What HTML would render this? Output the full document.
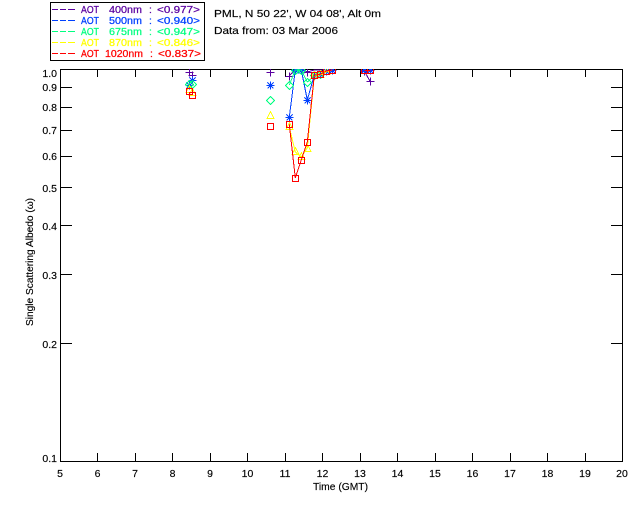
<!DOCTYPE html>
<html>
<head>
<meta charset="utf-8">
<style>
html,body{margin:0;padding:0;background:#fff;width:640px;height:512px;overflow:hidden}
svg{display:block}
text{font-family:"Liberation Sans",sans-serif;font-size:10.5px;fill:#000;stroke:#000;stroke-width:.15}
.l{shape-rendering:crispEdges}
.c1 text{fill:#5a00a0;stroke:#5a00a0;stroke-width:.25}
.c2 text{fill:#0040ff;stroke:#0040ff;stroke-width:.25}
.c3 text{fill:#00ff80;stroke:#00ff80;stroke-width:.25}
.c4 text{fill:#ffff00;stroke:#ffff00;stroke-width:.25}
.c5 text{fill:#ff0000;stroke:#ff0000;stroke-width:.25}
</style>
</head>
<body>
<svg width="640" height="512" viewBox="0 0 640 512" xmlns="http://www.w3.org/2000/svg">
<defs>
<clipPath id="c"><rect x="60" y="69" width="563" height="392"/></clipPath>
<path id="p" d="M-4 0H4M0-4V4" fill="none" stroke-width="1"/>
<path id="s" d="M-4 0H4M0-4V4M-3-3L3 3M-3 3L3-3" fill="none" stroke-width="1"/>
<path id="d" d="M0-4L4 0L0 4L-4 0Z" fill="none" stroke-width="1"/>
<path id="t" d="M0-5L3.5 2H-3.5Z" fill="none" stroke-width="1"/>
<rect id="q" x="-3" y="-3" width="6" height="6" fill="none" stroke-width="1"/>
</defs>

<!-- legend -->
<rect x="50.5" y="2.5" width="154" height="58" fill="none" stroke="#000" class="l"/>
<g class="l" fill="none">
<path d="M52 9.5h6M60 9.5h6M68 9.5h7" stroke="#5a00a0"/>
<path d="M52 20.5h6M60 20.5h6M68 20.5h7" stroke="#0040ff"/>
<path d="M52 31.5h6M60 31.5h6M68 31.5h7" stroke="#00ff80"/>
<path d="M52 42.5h6M60 42.5h6M68 42.5h7" stroke="#ffff00"/>
<path d="M52 53.5h6M60 53.5h6M68 53.5h7" stroke="#ff0000"/>
</g>
<g class="c1">
<text x="81" y="13" textLength="18" lengthAdjust="spacingAndGlyphs">AOT</text>
<text x="109" y="13" textLength="33" lengthAdjust="spacingAndGlyphs">400nm</text>
<text x="149" y="13">:</text>
<text x="157" y="13" textLength="43" lengthAdjust="spacingAndGlyphs">&lt;0.977&gt;</text>
</g>
<g class="c2">
<text x="81" y="24" textLength="18" lengthAdjust="spacingAndGlyphs">AOT</text>
<text x="109" y="24" textLength="33" lengthAdjust="spacingAndGlyphs">500nm</text>
<text x="149" y="24">:</text>
<text x="157" y="24" textLength="43" lengthAdjust="spacingAndGlyphs">&lt;0.940&gt;</text>
</g>
<g class="c3">
<text x="81" y="35" textLength="18" lengthAdjust="spacingAndGlyphs">AOT</text>
<text x="109" y="35" textLength="33" lengthAdjust="spacingAndGlyphs">675nm</text>
<text x="149" y="35">:</text>
<text x="157" y="35" textLength="43" lengthAdjust="spacingAndGlyphs">&lt;0.947&gt;</text>
</g>
<g class="c4">
<text x="81" y="46" textLength="18" lengthAdjust="spacingAndGlyphs">AOT</text>
<text x="109" y="46" textLength="33" lengthAdjust="spacingAndGlyphs">870nm</text>
<text x="149" y="46">:</text>
<text x="157" y="46" textLength="43" lengthAdjust="spacingAndGlyphs">&lt;0.846&gt;</text>
</g>
<g class="c5">
<text x="81" y="57" textLength="18" lengthAdjust="spacingAndGlyphs">AOT</text>
<text x="105" y="57" textLength="38" lengthAdjust="spacingAndGlyphs">1020nm</text>
<text x="150" y="57">:</text>
<text x="158" y="57" textLength="43" lengthAdjust="spacingAndGlyphs">&lt;0.837&gt;</text>
</g>

<!-- title -->
<text x="214" y="17" textLength="167" lengthAdjust="spacingAndGlyphs">PML, N 50 22', W 04 08', Alt 0m</text>
<text x="214" y="34" textLength="124" lengthAdjust="spacingAndGlyphs">Data from: 03 Mar 2006</text>

<!-- axes -->
<g class="l" fill="none" stroke="#000">
<rect x="60.5" y="69.5" width="562" height="392"/>
<path d="M97.5 69v8M135.5 69v8M172.5 69v8M210.5 69v8M247.5 69v8M285.5 69v8M322.5 69v8M360.5 69v8M397.5 69v8M435.5 69v8M472.5 69v8M510.5 69v8M547.5 69v8M585.5 69v8"/>
<path d="M97.5 453v8M135.5 453v8M172.5 453v8M210.5 453v8M247.5 453v8M285.5 453v8M322.5 453v8M360.5 453v8M397.5 453v8M435.5 453v8M472.5 453v8M510.5 453v8M547.5 453v8M585.5 453v8"/>
<path d="M60 87.5h12M60 107.5h12M60 130.5h12M60 156.5h12M60 187.5h12M60 225.5h12M60 274.5h12M60 343.5h12"/>
<path d="M611 87.5h12M611 107.5h12M611 130.5h12M611 156.5h12M611 187.5h12M611 225.5h12M611 274.5h12M611 343.5h12"/>
</g>

<!-- y labels -->
<g text-anchor="end">
<text x="57" y="77">1.0</text>
<text x="57" y="91">0.9</text>
<text x="57" y="111">0.8</text>
<text x="57" y="134">0.7</text>
<text x="57" y="160">0.6</text>
<text x="57" y="192">0.5</text>
<text x="57" y="230">0.4</text>
<text x="57" y="279">0.3</text>
<text x="57" y="348">0.2</text>
<text x="57" y="462">0.1</text>
</g>
<!-- x labels -->
<g text-anchor="middle">
<text x="60" y="477">5</text><text x="97.5" y="477">6</text><text x="135" y="477">7</text>
<text x="172.5" y="477">8</text><text x="210" y="477">9</text><text x="247.5" y="477">10</text>
<text x="285" y="477">11</text><text x="322.5" y="477">12</text><text x="360" y="477">13</text>
<text x="397.5" y="477">14</text><text x="435" y="477">15</text><text x="472.5" y="477">16</text>
<text x="510" y="477">17</text><text x="547.5" y="477">18</text><text x="585" y="477">19</text>
<text x="622" y="477">20</text>
</g>
<text x="313" y="490" textLength="55" lengthAdjust="spacingAndGlyphs">Time (GMT)</text>
<text transform="translate(33,326) rotate(-90)" textLength="128" lengthAdjust="spacingAndGlyphs">Single Scattering Albedo (ω)</text>

<!-- data -->
<g clip-path="url(#c)" fill="none" class="l">
<g stroke="#5a00a0">
<path d="M289.3 76L295.3 69L301.3 69L307.3 72L314.3 70L320.3 70L326.3 70L332.3 70M364.3 71L370.3 81.7" stroke-width="1"/>
<use href="#p" x="189.5" y="72.5"/><use href="#p" x="192.5" y="75.5"/><use href="#p" x="270.5" y="72.5"/><use href="#p" x="289.5" y="76.5"/><use href="#p" x="307.5" y="72.5"/><use href="#p" x="364.5" y="71.5"/><use href="#p" x="370.5" y="81.5"/>
</g>
<g stroke="#0040ff">
<path d="M289.3 117.3L295.3 70L301.3 70L307.3 100L314.3 75.3L320.3 74.3L326.3 71L332.3 70M364.3 70.7L370.3 70.7" stroke-width="1"/>
<use href="#s" x="189.5" y="85.5"/><use href="#s" x="192.5" y="80.5"/><use href="#s" x="270.5" y="85.5"/><use href="#s" x="289.5" y="117.5"/><use href="#s" x="295.5" y="70.5"/><use href="#s" x="301.5" y="70.5"/><use href="#s" x="307.5" y="100.5"/><use href="#s" x="314.5" y="75.5"/><use href="#s" x="320.5" y="74.5"/><use href="#s" x="326.5" y="71.5"/><use href="#s" x="332.5" y="70.5"/><use href="#s" x="364.5" y="70.5"/><use href="#s" x="370.5" y="70.5"/>
</g>
<g stroke="#00ff80">
<path d="M289.3 85L295.3 70L301.3 70L307.3 82L314.3 75.3L320.3 74.3L326.3 71L332.3 70" stroke-width="1"/>
<use href="#d" x="189.5" y="84.5"/><use href="#d" x="192.5" y="84.5"/><use href="#d" x="270.5" y="100.5"/><use href="#d" x="289.5" y="85.5"/><use href="#d" x="295.5" y="70.5"/><use href="#d" x="301.5" y="70.5"/><use href="#d" x="307.5" y="82.5"/><use href="#d" x="314.5" y="75.5"/><use href="#d" x="320.5" y="74.5"/>
</g>
<g stroke="#ffff00">
<path d="M289.3 127L295.3 152L301.3 157L307.3 148L314.3 76L320.3 75L326.3 72L332.3 70" stroke-width="1"/>
<use href="#t" x="189.5" y="90.5"/><use href="#t" x="192.5" y="93.5"/><use href="#t" x="270.5" y="116.5"/><use href="#t" x="289.5" y="127.5"/><use href="#t" x="295.5" y="152.5"/><use href="#t" x="301.5" y="157.5"/><use href="#t" x="307.5" y="149.5"/><use href="#t" x="314.5" y="76.5"/><use href="#t" x="320.5" y="75.5"/><use href="#t" x="326.5" y="72.5"/>
</g>
<g stroke="#ff0000">
<path d="M289.3 124.3L295.3 178L301.3 160L307.3 142L314.3 75.3L320.3 74.3L326.3 71L332.3 70M364.3 70.7L370.3 70.7" stroke-width="1"/>
<use href="#q" x="189.5" y="91.5"/><use href="#q" x="192.5" y="95.5"/><use href="#q" x="270.5" y="126.5"/><use href="#q" x="289.5" y="124.5"/><use href="#q" x="295.5" y="178.5"/><use href="#q" x="301.5" y="160.5"/><use href="#q" x="307.5" y="142.5"/><use href="#q" x="314.5" y="75.5"/><use href="#q" x="320.5" y="74.5"/><use href="#q" x="326.5" y="71.5"/><use href="#q" x="332.5" y="70.5"/><use href="#q" x="364.5" y="70.5"/><use href="#q" x="370.5" y="70.5"/>
</g>
</g>
</svg>
</body>
</html>
